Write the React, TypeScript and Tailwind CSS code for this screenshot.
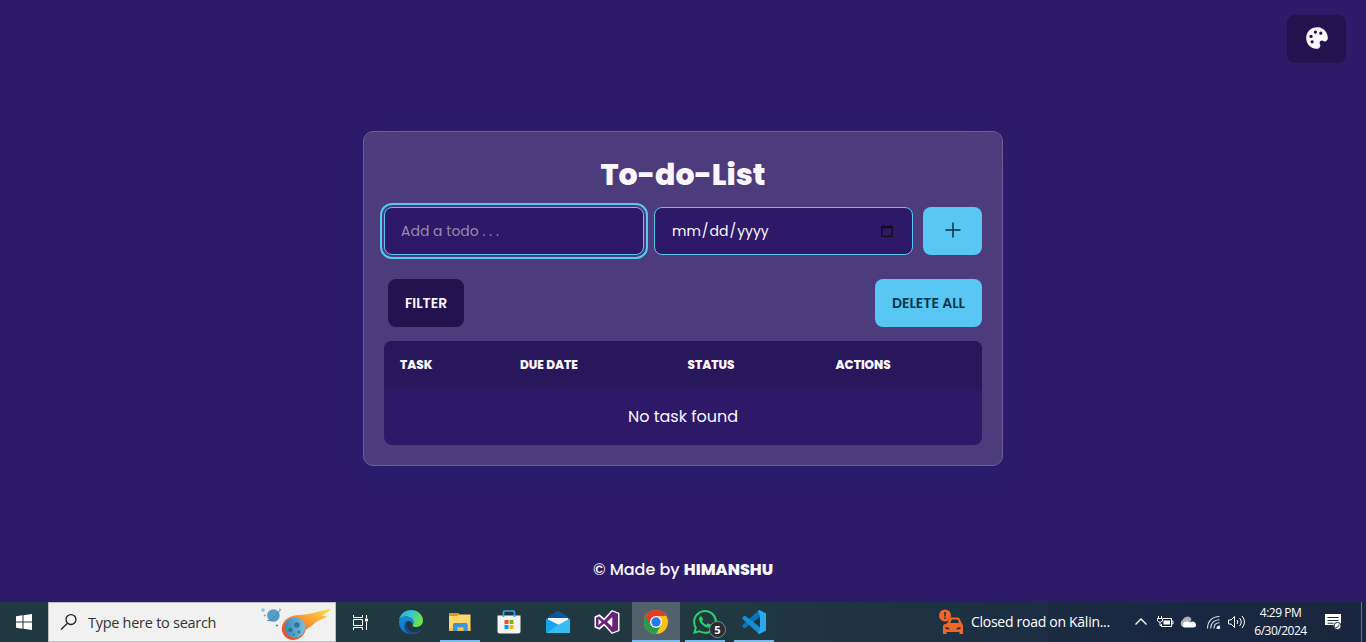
import type { ReactNode } from "react";
import { BiSolidPalette } from "react-icons/bi";
import { SiWhatsapp } from "react-icons/si";

const poppins = "font-['Poppins',Inter,sans-serif]";
const segoe = "font-['Segoe_UI','Open_Sans',sans-serif]";

function Slot({ children, active = false, running = false }: { children: ReactNode; active?: boolean; running?: boolean }) {
  return (
    <div className={`relative flex h-10 w-12 items-center justify-center ${active ? "bg-[#53616b]" : ""}`}>
      {children}
      {(active || running) && <i className={`absolute bottom-0 h-0.5 bg-[#76b9ed] ${active ? "w-12" : "w-10"}`} />}
    </div>
  );
}

function Edge() {
  return (
    <svg width="26" height="26" viewBox="0 0 26 26">
      <defs>
        <linearGradient id="eg" x1="0" y1="0" x2="1" y2=".4"><stop stopColor="#2fa9e0" /><stop offset=".5" stopColor="#36c6cf" /><stop offset="1" stopColor="#6ce34a" /></linearGradient>
        <linearGradient id="eb" x1="0" y1="0" x2="0" y2="1"><stop stopColor="#158fe0" /><stop offset="1" stopColor="#0a6cc8" /></linearGradient>
      </defs>
      <path d="M1 11C2 5 7 1 13 1c7 0 12 5 12 10.500c0 4-3 6.500-7 6.500c-2 0-3.500-.8-3.500-1.600c0-.7 1-1.200 1-3C15.500 10 12 7.500 8 7.500C4.500 7.500 2 9 1 11Z" fill="url(#eg)" />
      <path d="M1 13c0-3.500 3.200-5.500 7-5.500c4 0 7.500 2.500 7.500 5.500c0 1-.3 2-.8 2.500C14 12.500 10.500 11 8 13c-3 2.500-1.500 10 5 12C6 25 1 19.500 1 13Z" fill="url(#eb)" />
      <path d="M9.500 12.300c-3.500 4 .5 11 6.500 11c2.500 0 5-1 6.500-2c.6-.3 1 .1.600.7C21 24.200 17.500 25.500 14 25C7.500 24 5 15 9.500 12.300Z" fill="#124d92" />
    </svg>
  );
}

function Folder() {
  return (
    <svg width="24" height="24" viewBox="0 0 24 24">
      <path d="M1 3h9l1.500 1.500h11V21H1Z" fill="#ffd66c" />
      <path d="M1 3h9l1 1.200L9.700 6H1Z" fill="#df9b16" />
      <path d="M1 18.500h21.500V21H1Z" fill="#efbd4e" />
      <path d="M5 21v-6.800L6.200 13h12.300l1.200 1.200V21h-4.200v-3.500H9.500V21Z" fill="#3d95dc" />
    </svg>
  );
}

function Store() {
  return (
    <svg width="26" height="26" viewBox="0 0 26 26">
      <path d="M1.500 6.500h23V22a2.500 2.500 0 0 1-2.500 2.500H4A2.500 2.500 0 0 1 1.500 22Z" fill="#f4f4f4" />
      <path d="M7.500 8V3.200C7.500 2.400 8 2 8.700 2h8.600c.7 0 1.200.4 1.200 1.200V8" fill="none" stroke="#2aa9ec" strokeWidth="1.700" />
      <path d="M8.500 11h4v4h-4Z" fill="#f05024" /><path d="M13.500 11h4v4h-4Z" fill="#78b80b" />
      <path d="M8.500 16h4v4h-4Z" fill="#009fe9" /><path d="M13.500 16h4v4h-4Z" fill="#f8b900" />
    </svg>
  );
}

function Mail() {
  return (
    <svg width="26" height="26" viewBox="0 0 26 26">
      <path d="M1 9.500L12 2h2l11 7.500V13H1Z" fill="#0b56a3" />
      <path d="M3 9h20v6l-10 4L3 15Z" fill="#f3f4f6" />
      <path d="M1 9.500l13 6.500L1 24Z" fill="#16a5e8" /><path d="M25 9.500V24H1l12-8Z" fill="#37bcf2" />
    </svg>
  );
}

function VisualStudio() {
  return (
    <svg width="26" height="26" viewBox="0 0 26 26">
      <path d="M.5 7.500l5-2.200 4.700 4L17.800 1l7.700 3v18l-7.700 3-7.600-8.300-4.700 4-5-2.200Z" fill="white" />
      <path d="M2 8.700L5 7.200 10.200 11.500 18.300 2.500 24 4.800v16.400l-5.700 2.300-8.100-9L5 18.800 2 17.300ZM18.300 8L13 13l5.300 5ZM4.500 10v6l3.300-3Z" fill="#68217a" fillRule="evenodd" />
    </svg>
  );
}

function Chrome() {
  return (
    <svg width="26" height="26" viewBox="0 0 26 26">
      <circle cx="13" cy="13" r="12" fill="#fbc116" />
      <path d="M13 13L2.600 7A12 12 0 0 0 13 25l5.200-9Z" fill="#269b4b" />
      <path d="M2.600 7A12 12 0 0 1 23.400 7H13l-5.200 9Z" fill="#e33b2e" />
      <circle cx="13" cy="13" r="6" fill="white" /><circle cx="13" cy="13" r="4.700" fill="#2878ed" />
    </svg>
  );
}

function Code() {
  return (
    <svg width="26" height="26" viewBox="0 0 26 26">
      <path d="M18 1L1.500 16v1.800l2.300 1.700L20 7Z" fill="#0874b9" />
      <path d="M18 25L1.500 10V8.200l2.300-1.700L20 19Z" fill="#158cd3" />
      <path d="M18 1l7 3.300v17.400L18 25l-1-.5 2-5.500V7l-2-5.500Z" fill="#29a8ee" />
    </svg>
  );
}

function Comet() {
  return (
    <svg width="74" height="38" viewBox="0 0 74 38">
      <defs>
        <linearGradient id="flame" x1="0" y1="1" x2="1" y2="0"><stop stopColor="#e94b2e" /><stop offset=".25" stopColor="#ee5f30" /><stop offset=".6" stopColor="#f9a236" /><stop offset="1" stopColor="#ffdf42" /></linearGradient>
        <linearGradient id="rock"><stop stopColor="#3c88b4" /><stop offset="1" stopColor="#73c3e0" /></linearGradient>
      </defs>
      <circle cx="2" cy="7" r="1.700" fill="#8fbfda" /><circle cx="4" cy="12.500" r="1.100" fill="#70add0" /><circle cx="16" cy="22.500" r="1.100" fill="#4b91bd" />
      <circle cx="12.500" cy="12.500" r="6.300" fill="#5a9dc2" /><path d="M6 17c2 2 6-1 9-4.500s6-7 3.500-6.500" fill="none" stroke="#3d83ac" />
      <path d="M24 17.500C30 11 39 12.500 47 11C56 9.500 62 7 70 6c-1 3-6 4-9 7c2 0 5 0 5 .5C62 17 57 17 53 21c-3 2.500-5 3.500-8 6c-3 10-14 12.500-20 7.500c-5-4.500-5.500-11.500-1-17Z" fill="url(#flame)" />
      <circle cx="34" cy="24.500" r="10.300" fill="url(#rock)" />
      <circle cx="36" cy="22" r="2.800" fill="#356f9b" /><circle cx="29.500" cy="27" r="2.200" fill="#356f9b" /><circle cx="38" cy="29" r="1.500" fill="#3a78a3" /><circle cx="33" cy="31.500" r="1" fill="#356f9b" />
    </svg>
  );
}

function RoadAlert() {
  return (
    <svg width="26" height="26" viewBox="0 0 26 26" fill="#f56525">
      <path d="M9.500 14l2-4.500Q12 8.500 13.500 8.500h6.300q1.300 0 1.800 1L23.500 14l1 .8V17H8v-2.200Z" />
      <path d="M12.200 14l1.500-3.500h6l1.400 3.500Z" fill="#1f333f" />
      <path d="M5 17.500q0-2.500 2.500-2.500H22.500q2.500 0 2.500 2.500V25h-3.500v-2h-13v2H5Z" />
      <path d="M7.500 18l4 1-.3 1.500-3.700-.6Zm15 0-4 1 .3 1.500 3.700-.6Z" fill="#1f333f" />
      <circle cx="7" cy="6.500" r="6" /><path d="M6.200 3h1.600v4.500H6.200Zm0 5.500h1.600V10H6.200Z" fill="#1c3039" />
    </svg>
  );
}

function Taskbar() {
  return (
    <div className={`flex h-10 shrink-0 items-center bg-[linear-gradient(90deg,#203840_0%,#203840_55%,#1c3042_72%,#1a2742_85%,#19263d_100%)] text-white ${segoe}`}>
      <div className="flex w-12 justify-center">
        <svg width="16" height="16" viewBox="0 0 16 16" fill="white"><path d="M0 2.200L6.500 1.300V7.500H0ZM7.500 1.200L16 0v7.500H7.500ZM0 8.500h6.500v6.200L0 13.800ZM7.500 8.500H16V16l-8.500-1.200Z" /></svg>
      </div>
      <div className="flex h-10 w-72 items-center border border-[#bfc0c0] bg-[#f1f1f1] pl-[11px] text-[#343434]">
        <svg width="18" height="18" viewBox="0 0 18 18" fill="none" stroke="#222" strokeWidth="1.300"><circle cx="11" cy="6.500" r="5" /><path d="M7.500 10.200L1 16.500" /></svg>
        <span className="ml-2.5 w-[174px] whitespace-nowrap pt-0.5 text-[14.500px] tracking-[-0.27px]">Type here to search</span>
        <Comet />
      </div>
      <div className="mr-[3px] flex w-12 justify-center">
        <svg width="17" height="17" viewBox="0 0 17 17" fill="none" stroke="white" strokeWidth="1"><path d="M1.500 1v2.500h9V1M1.500 16v-2.500h9V16M1.500 5.500h9v6h-9ZM14.500 1v3m0 4v8" /><path d="M13 4.500h3v3h-3Z" fill="white" stroke="none" /></svg>
      </div>
      <div className="flex gap-px">
        <Slot><Edge /></Slot>
        <Slot running><Folder /></Slot>
        <Slot><Store /></Slot>
        <Slot><Mail /></Slot>
        <Slot><VisualStudio /></Slot>
        <Slot active><Chrome /></Slot>
        <Slot running>
          <SiWhatsapp className="size-6 text-[#25d366]" />
          <b className="absolute bottom-1 left-[28px] flex size-[17px] items-center justify-center rounded-full border border-[#82898b] bg-[#272d30] text-[11px] leading-none">5</b>
        </Slot>
        <Slot running><Code /></Slot>
      </div>
      <div className="ml-auto flex h-10 items-center">
        <RoadAlert />
        <span className="ml-[7px] w-[163px] whitespace-nowrap text-sm tracking-[-0.28px]">Closed road on Kālin...</span>
        <SystemIcons />
        <div className="ml-[6px] w-[57px] whitespace-nowrap text-center text-xs leading-[18px] tracking-[-0.5px]"><div>4:29 PM</div><div>6/30/2024</div></div>
        <svg className="ml-[15px] mr-[19px]" width="18" height="18" viewBox="0 0 18 18"><path d="M1 1h16v11h-4v4l-4-4H1Z" fill="white" /><path d="M3.500 4.500h11M3.500 7.500h11M3.500 10.200h6" stroke="#1b2b3d" /><circle cx="13.500" cy="13" r="3.600" fill="white" stroke="#1b2b3d" /><path d="M11.500 14.500c2 0 3.500-1 3.500-3" fill="none" stroke="#1b2b3d" /></svg>
        <i className="mr-1 h-10 w-px bg-[#647181]" />
      </div>
    </div>
  );
}

function SystemIcons() {
  return (
    <div className="flex items-center">
      <svg width="14" height="14" viewBox="0 0 14 14" fill="none" stroke="white" strokeWidth="1.300"><path d="M1.500 9.500L7 4l5.500 5.500" /></svg>
      <svg className="ml-2" width="18" height="16" viewBox="0 0 18 16"><path d="M7 4.500h8.500v8h-10V10M15.500 7h1.500v3h-1.500M2.500 2v2.500m3-2.500v2.500M1.500 4.500h5V7L4 8.500 1.500 7ZM4 8.500v3h1.500" fill="none" stroke="white" /><path d="M7.500 6.500H14v4H7.500Z" fill="white" /></svg>
      <svg className="ml-[5px]" width="18" height="16" viewBox="0 0 18 16"><path d="M4 13a4 4 0 0 1-.5-7A5 5 0 0 1 12.500 5l-2 5Z" fill="#aab0b8" /><path d="M5 13.500a3 3 0 0 1 0-5q3-2 6 0a3.500 3.500 0 0 1 6 2.500q0 2.500-2.500 2.500Z" fill="#fff" /></svg>
      <svg className="ml-[9px]" width="15" height="16" viewBox="0 0 15 16" fill="none" stroke="#d9dfe5" strokeWidth="1.100"><path d="M1.500 14.500C1.500 7.500 6 2.500 13.500 2.500M4.700 14.500c0-5 3.300-8.800 8.800-8.800M8 14.500c0-3.500 2-5.700 5.500-5.700" /><path d="M11 14.500q0-2.500 2.500-2.500v2.500Z" fill="white" /></svg>
      <svg className="ml-1.5" width="19" height="16" viewBox="0 0 19 16" fill="none" stroke="white"><path d="M1.500 6h2.500l3.500-3.500v11L4 10H1.500ZM10 6q1.800 2 0 4M12.500 4q3.500 4 0 8M15 2q5 6 0 12" /></svg>
    </div>
  );
}

export default function App() {
  return (
    <div className={`flex h-[642px] flex-col overflow-hidden bg-[#2d1b69] text-[#f9f7fd] ${poppins}`}>
      <header className="flex h-[131px] shrink-0 justify-end pr-5 pt-[15px]">
        <button className="flex h-12 w-[59px] items-center justify-center rounded-lg bg-[#22124e]"><BiSolidPalette className="mb-0.5 size-[26px]" /></button>
      </header>
      <main className="mx-auto flex h-[335px] w-[640px] shrink-0 flex-col rounded-[10px] border border-[#6f5c94] bg-[#4d3c7c] px-5 shadow-[0_8px_32px_0_rgba(31,38,135,0.37)]">
        <h1 className="mt-[23px] h-10 whitespace-nowrap text-center text-[30px] font-extrabold leading-10">To-do-List</h1>
        <div className="mt-3 flex h-12">
          <div className="flex w-[260px] items-center rounded-lg border border-[#58c7f3] bg-[#2d1967] pl-4 text-sm text-[#948baa] outline-2 outline-offset-2 outline-[#58c7f3]">Add a todo . . .</div>
          <div className="ml-2.5 flex w-[259px] items-center justify-between rounded-lg border border-[#58c7f3] bg-[#2d1967] pl-4 pr-[18px] text-sm">
            <span><span className="px-px">mm</span>/<span className="px-px">dd</span>/<span className="px-px">yyyy</span></span>
            <svg width="14" height="14" viewBox="0 0 14 14"><path d="M1.700 3h10.600v9.300H1.700ZM3.500.8v2m7-2v2" fill="none" stroke="#100b20" strokeWidth="1.300" /><path d="M1.200 2h11.600v2.300H1.200Z" fill="#100b20" /></svg>
          </div>
          <button className="ml-2.5 flex w-[59px] items-center justify-center rounded-lg bg-[#58c7f3]"><svg width="16" height="16" viewBox="0 0 16 16" className="mb-0.5" stroke="#092f3d" strokeWidth="1.500"><path d="M8 .5v15M.5 8h15" /></svg></button>
        </div>
        <div className="mt-6 flex h-12 justify-between pl-1 text-sm font-semibold">
          <button className="w-[76px] rounded-lg bg-[#22124e]">FILTER</button>
          <button className="w-[107px] whitespace-nowrap rounded-lg bg-[#58c7f3] text-[#053549]">DELETE ALL</button>
        </div>
        <div className="mt-3.5 h-[104px] overflow-hidden rounded-lg bg-[#2d1967]">
          <div className="grid h-12 grid-cols-[120px_167.5px_148px_1fr] items-center bg-[#28175b] pl-4 text-xs font-extrabold">
            <span>TASK</span><span>DUE DATE</span><span>STATUS</span><span>ACTIONS</span>
          </div>
          <div className="flex h-14 items-center justify-center text-base">No task found</div>
        </div>
      </main>
      <footer className="flex grow items-center justify-center pt-[72px] text-base font-medium"><span>© Made by <b className="font-extrabold">HIMANSHU</b></span></footer>
      <Taskbar />
    </div>
  );
}
